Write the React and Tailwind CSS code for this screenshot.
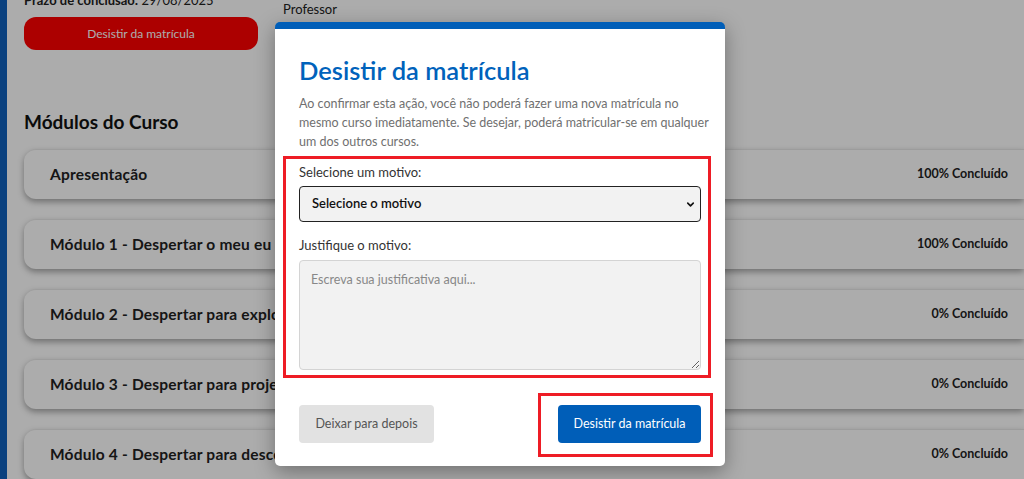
import React from "react";
import { ChevronDown } from "lucide-react";

const MODULES = [
  { title: "Apresentação", progress: "100% Concluído" },
  { title: "Módulo 1 - Despertar o meu eu", progress: "100% Concluído" },
  { title: "Módulo 2 - Despertar para explorar o mundo", progress: "0% Concluído" },
  { title: "Módulo 3 - Despertar para projetar o futuro", progress: "0% Concluído" },
  { title: "Módulo 4 - Despertar para descobrir talentos", progress: "0% Concluído" },
];

const pageFont = { fontFamily: "Lato, 'Open Sans', sans-serif" };
const modalFont = { fontFamily: "Lato, 'Noto Sans', sans-serif" };

export default function App() {
  return (
    <div className="relative h-[479px] w-[1024px] overflow-hidden bg-white" style={pageFont}>
      <div className="flex h-full">
        <div className="w-[7px] shrink-0 bg-[#0f61bd]" />
        <main className="flex-1 pl-[17px]">
          <div className="flex gap-[25px]">
            <div className="w-[234px]">
              <p className="-mt-[9px] text-[13px] leading-[18px] text-[#222]">
                <span className="font-bold">Prazo de conclusão:</span> 29/08/2025
              </p>
              <button className="mt-[8px] h-[33px] w-full rounded-xl bg-[#ff0000] text-[12px] text-white">
                Desistir da matrícula
              </button>
            </div>
            <div className="flex-1 pt-[1px]">
              <p className="text-[13px] leading-[16px] text-[#222]">Professor</p>
            </div>
          </div>

          <h2 className="mt-[59px] text-[19px] font-bold leading-[26px] text-[#111]">Módulos do Curso</h2>

          <div className="mt-[14px] flex flex-col gap-[20px]">
            {MODULES.map((m) => (
              <div
                key={m.title}
                className="flex h-[50px] items-center justify-between rounded-l-xl border-t border-[#e8e8e8] bg-white pl-[26px] pr-[16px] shadow-[0_3px_6px_rgba(0,0,0,0.35)]"
              >
                <span className="text-[15.5px] font-bold tracking-[0.2px] text-[#222]">{m.title}</span>
                <span className="text-[12.5px] font-bold text-[#222]">{m.progress}</span>
              </div>
            ))}
          </div>
        </main>
      </div>

      {/* overlay */}
      <div className="absolute inset-0 bg-black/[0.325]" />

      {/* modal */}
      <div
        className="absolute left-[275px] top-[22px] w-[450px] rounded-[5px] border-t-[7px] border-[#005eb8] bg-white px-6 pb-[23px] pt-[25px] shadow-[0_6px_20px_rgba(0,0,0,0.35)]"
        style={modalFont}
      >
        <h2 className="text-[25.5px] font-semibold leading-[32px] text-[#0062bb]">Desistir da matrícula</h2>
        <p className="-mr-[10px] mt-[8px] text-[12.5px] leading-[19px] text-[#707070]">
          Ao confirmar esta ação, você não poderá fazer uma nova matrícula no mesmo curso imediatamente. Se desejar, poderá matricular-se em qualquer um dos outros cursos.
        </p>

        <label className="mt-[12px] block text-[13px] leading-[18px] text-[#333]">Selecione um motivo:</label>
        <div className="relative mt-[5px]">
          <select className="h-[36px] w-full appearance-none rounded-[4px] border-[1.5px] border-[#222] bg-[#f2f2f2] pl-[12px] text-[13px] font-semibold text-[#111]">
            <option>Selecione o motivo</option>
          </select>
          <ChevronDown className="pointer-events-none absolute right-[5px] top-[13px] h-[11px] w-[11px] text-[#111]" strokeWidth={3.5} />
        </div>

        <label className="mt-[14px] block text-[13px] leading-[18px] text-[#333]">Justifique o motivo:</label>
        <textarea
          placeholder="Escreva sua justificativa aqui..."
          className="mt-[6px] block h-[110px] w-full rounded-[4px] border border-[#d4d4d4] bg-[#f2f2f2] px-[11px] py-[10px] text-[12.5px] text-[#333] placeholder:text-[#888]"
        />

        <div className="mt-[35px] flex items-center justify-between">
          <button className="h-[38px] w-[135px] rounded-[4px] bg-[#e2e2e2] text-[12.5px] text-[#555]">Deixar para depois</button>
          <button className="h-[38px] w-[143px] rounded-[4px] bg-[#005eb8] text-[12.5px] text-white">Desistir da matrícula</button>
        </div>
      </div>

      {/* annotation boxes */}
      <div className="pointer-events-none absolute left-[283px] top-[156px] h-[222px] w-[428px] border-[3px] border-[#ee1c25]" />
      <div className="pointer-events-none absolute left-[538px] top-[393px] h-[64px] w-[175px] border-[3px] border-[#ee1c25]" />
    </div>
  );
}
